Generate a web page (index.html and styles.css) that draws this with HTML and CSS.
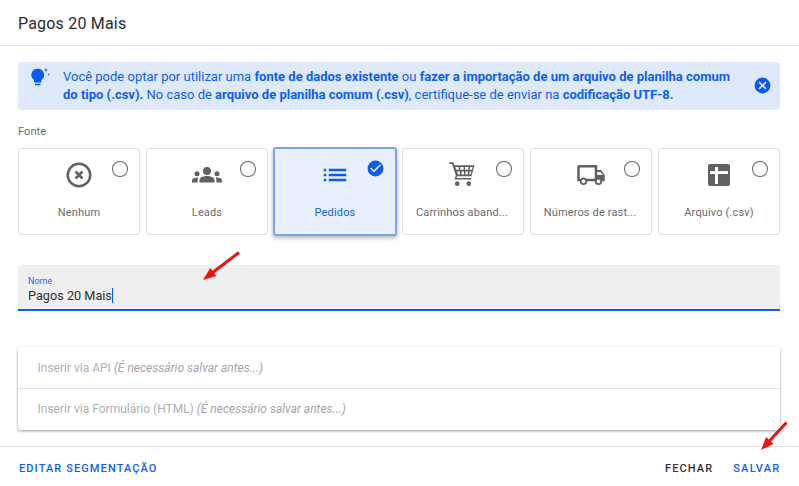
FILE: index.html
```html
<!DOCTYPE html>
<html lang="pt">
<head>
<meta charset="utf-8">
<title>Pagos 20 Mais</title>
<link rel="stylesheet" href="styles.css">
</head>
<body>
<div class="dialog">
  <header class="title">Pagos 20 Mais</header>
  <main class="content">
    <div class="alert">
      <svg class="alert-icon" viewBox="0 0 24 24"><path d="M9.500 4a6.800 6.800 0 0 0-4 12.400V19h8v-2.600A6.800 6.800 0 0 0 9.500 4zM6.500 20.500h6V22h-6z"/><path d="M18.500 3l.6 1.900 1.900.6-1.900.6-.6 1.900-.6-1.900-1.900-.6 1.900-.6zM21.500 9l.4 1.100 1.100.4-1.100.4-.4 1.100-.4-1.100-1.100-.4 1.100-.4z"/></svg>
      <p class="alert-text"><span class="line">Você pode optar por utilizar uma <b>fonte de dados existente</b> ou <b>fazer a importação de um arquivo de planilha comum</b></span><span class="line"><b>do tipo (.csv).</b> No caso de <b>arquivo de planilha comum (.csv)</b>, certifique-se de enviar na <b>codificação UTF-8.</b></span></p>
      <svg class="alert-close" viewBox="0 0 24 24"><path d="M12 2a10 10 0 1 0 0 20 10 10 0 0 0 0-20zm5 13.600L15.600 17 12 13.400 8.400 17 7 15.600 10.600 12 7 8.400 8.400 7 12 10.600 15.600 7 17 8.400 13.400 12z"/></svg>
    </div>
    <div class="label">Fonte</div>
    <div class="cards">
      <div class="card">
        <svg class="card-icon" viewBox="0 0 24 24"><path d="M12 2a10 10 0 1 0 0 20 10 10 0 0 0 0-20zm0 18a8 8 0 1 1 0-16 8 8 0 0 1 0 16z"/><path class="cross" d="M9.200 9.200l5.600 5.600M14.800 9.200l-5.600 5.600"/></svg>
        <span class="radio"></span>
        <span class="card-name">Nenhum</span>
      </div>
      <div class="card">
        <svg class="card-icon" viewBox="0 0 24 24"><path d="M12 12.750c1.630 0 3.070.39 4.240.9A3 3 0 0 1 18 16.390V18H6v-1.600c0-1.190.68-2.260 1.760-2.740 1.170-.52 2.610-.91 4.240-.91zM4 13a2 2 0 1 0 0-4 2 2 0 0 0 0 4zm1.130 1.100A7 7 0 0 0 4 14c-.99 0-1.930.21-2.780.58A2 2 0 0 0 0 16.430V18h4.500v-1.610c0-.83.230-1.610.63-2.290zM20 13a2 2 0 1 0 0-4 2 2 0 0 0 0 4zm4 3.430c0-.81-.48-1.530-1.220-1.850A6.950 6.950 0 0 0 20 14c-.39 0-.76.04-1.130.1.400.68.630 1.460.630 2.290V18H24v-1.570zM12 5.500a3.200 3.200 0 1 1 0 6.400 3.200 3.200 0 0 1 0-6.400z"/></svg>
        <span class="radio"></span>
        <span class="card-name">Leads</span>
      </div>
      <div class="card card-active">
        <svg class="card-icon" viewBox="0 0 24 24"><path d="M3 7h2v2H3zM3 11h2v2H3zM3 15h2v2H3zM7 7h14v2H7zM7 11h14v2H7zM7 15h14v2H7z"/></svg>
        <svg class="check" viewBox="0 0 24 24"><path d="M12 2a10 10 0 1 0 0 20 10 10 0 0 0 0-20zm-2 15-5-5 1.400-1.400 3.600 3.600 7.600-7.600L19 8z"/></svg>
        <span class="card-name">Pedidos</span>
      </div>
      <div class="card">
        <svg class="card-icon" viewBox="0 0 26 26"><path d="M1 2h3.600l1 2.500H23l-2.700 9.500H8l-.6 1.500H20V17H5.500l1.300-3.500L3.500 3.500H1zM6.300 6l.9 2.500h2.300L9.200 6zm4.200 0 .3 2.500h2.700V6zm4.300 0v2.500h2.600L17.700 6zm4.300 0-.4 2.500h2l.7-2.500zM7.800 10l.9 2.500h1.700L10.100 10zm3.800 0 .3 2.500h1.900V10zm3.500 0v2.500h1.900l.3-2.500zm3.700 0-.4 2.500h1.200l.7-2.500z"/><circle cx="8" cy="20.500" r="2"/><circle cx="18" cy="20.500" r="2"/></svg>
        <span class="radio"></span>
        <span class="card-name card-name-cut">Carrinhos aband...</span>
      </div>
      <div class="card">
        <svg class="card-icon" viewBox="0 0 24 24"><path d="M20 8h-3V4H3a2 2 0 0 0-2 2v11h2a3 3 0 0 0 6 0h6a3 3 0 0 0 6 0h2v-5zM6 18.500a1.500 1.500 0 1 1 0-3 1.500 1.500 0 0 1 0 3zM19.500 9.500l2 2.500H17V9.500zM18 18.500a1.500 1.500 0 1 1 0-3 1.500 1.500 0 0 1 0 3zM8.200 15A3 3 0 0 0 3.800 15H3V6h12v9z"/></svg>
        <span class="radio"></span>
        <span class="card-name card-name-cut">Números de rast...</span>
      </div>
      <div class="card">
        <svg class="card-icon" viewBox="0 0 30 30"><rect x="4" y="4" width="22" height="22" rx="2"/><path class="plus" d="M6 11h5V7h3v4h10v3H14v10h-3V14H6z"/></svg>
        <span class="radio"></span>
        <span class="card-name">Arquivo (.csv)</span>
      </div>
    </div>
    <div class="field">
      <span class="field-label">Nome</span>
      <span class="field-value">Pagos 20 Mais<i class="caret"></i></span>
    </div>
    <div class="panels">
      <div class="panel">Inserir via API <em>(É necessário salvar antes...)</em></div>
      <div class="panel">Inserir via Formulário (HTML) <em>(É necessário salvar antes...)</em></div>
    </div>
  </main>
  <footer class="actions">
    <span class="btn btn-blue">EDITAR SEGMENTAÇÃO</span>
    <span class="spacer"></span>
    <span class="btn btn-dark">FECHAR</span>
    <span class="btn btn-blue btn-wide">SALVAR</span>
  </footer>
</div>
<svg class="arrow arrow-name" viewBox="0 0 37 30"><path d="M0 29 7.300 17l2.100 2.800L35.100.3l1.800 2.400-25.700 19.500 2.100 2.800z"/></svg>
<svg class="arrow arrow-save" viewBox="0 0 27 30"><path d="M0 29 5.100 16.100l2.600 2.400L24.400.5l2.200 2-16.700 18 2.600 2.400z"/></svg>
</body>
</html>
```

FILE: styles.css
```css
* { box-sizing: border-box; }
html, body { margin: 0; padding: 0; background: #fff; }
body {
  width: 799px;
  height: 486px;
  overflow: hidden;
  position: relative;
  font-family: Roboto, "Liberation Sans", sans-serif;
  color: #2b2b2b;
}
.dialog { display: flex; flex-direction: column; height: 486px; }
.title {
  height: 46px;
  flex: none;
  padding: 14px 18px 0;
  font-size: 16px;
  line-height: 20px;
  letter-spacing: .2px;
  border-bottom: 1px solid #e0e0e0;
  color: #2c2c2c;
}
.content { flex: none; height: 400px; padding: 16px 19px 0 18px; }
.alert {
  height: 48px;
  display: flex;
  align-items: flex-start;
  background: #deeafc;
  border-radius: 3px;
  color: #0d5fee;
}
.alert-icon { width: 22px; height: 22px; margin: 3px 0 0 11px; fill: #0a5cf0; flex: none; }
.alert-text {
  margin: 6px 0 0 12px;
  width: 680px;
  font-size: 13px;
  line-height: 18px;
  flex: none;
}
.line { display: block; white-space: nowrap; }
.alert-text b { font-weight: 700; }
.alert-close { width: 19px; height: 19px; margin: 14px 0 0 10px; fill: #0a5cf0; flex: none; }
.label { margin-top: 15px; font-size: 11px; line-height: 14px; color: #6b6b6b; letter-spacing: .1px; }
.cards { display: flex; gap: 6px; margin-top: 9px; }
.card {
  position: relative;
  width: 122px;
  height: 87px;
  border: 1px solid #e0e0e0;
  border-radius: 3px;
  background: #fff;
  display: flex;
  flex-direction: column;
  align-items: center;
}
.card-icon { width: 30px; height: 30px; margin-top: 11px; fill: #616161; flex: none; }
.cross { fill: none; stroke: #616161; stroke-width: 2; }
.plus { fill: #fff; }
.card-name { margin-top: 16px; font-size: 11px; line-height: 14px; color: #6b6b6b; letter-spacing: .15px; white-space: nowrap; }
.card-name-cut { margin-right: 2px; }
.radio {
  position: absolute;
  top: 12px;
  right: 11.500px;
  width: 15.500px;
  height: 16px;
  border: 1.500px solid #666;
  border-radius: 50%;
}
.check { position: absolute; top: 10px; right: 10px; width: 19px; height: 19px; fill: #0a5cf0; }
.card-active {
  width: 124px;
  height: 89px;
  margin: -1px;
  background: #e8f0fe;
  border: 2px solid #7aa3ee;
  box-shadow: 0 2px 4px rgba(0,0,0,.3);
}
.card-active .card-icon { fill: #0a5cf0; }
.card-active .card-name { color: #0d5fee; }
.field {
  height: 46px;
  margin-top: 30px;
  padding: 11px 10px 0;
  background: #efefef;
  border-bottom: 2px solid #0a5cf0;
  border-radius: 3px 3px 0 0;
  display: flex;
  flex-direction: column;
}
.field-label { font-size: 9px; line-height: 11px; color: #2468e8; }
.field-value { font-size: 12.700px; line-height: 17px; color: #2f2f2f; display: flex; align-items: center; }
.caret { display: inline-block; width: 1px; height: 15px; background: #0a5cf0; }
.panels {
  margin-top: 36px;
  height: 83px;
  border-radius: 3px;
  box-shadow: 0 1px 3px rgba(0,0,0,.4);
  background: #fff;
  display: flex;
  flex-direction: column;
}
.panel {
  flex: none;
  height: 41px;
  display: flex;
  align-items: center;
  gap: 3px;
  padding: 1px 0 0 19.500px;
  font-size: 12px;
  color: #b0b0b0;
}
.panel + .panel { height: 42px; border-top: 1px solid #e0e0e0; padding: 0 0 1px 19.500px; }
.panel em { font-style: italic; color: #a5a5a5; }
.actions {
  flex: none;
  height: 40px;
  border-top: 1px solid #e0e0e0;
  display: flex;
  align-items: center;
  padding: 4px 18.500px 0 19px;
  gap: 20px;
}
.spacer { flex: 1; }
.btn { font-size: 11px; font-weight: 500; letter-spacing: 1.100px; }
.btn-blue { color: #0d5fee; }
.btn-dark { color: #333; }
.btn-wide { letter-spacing: 1.250px; }
.arrow { position: absolute; fill: #f01010; }
.arrow-name { left: 203px; top: 251px; width: 37px; height: 30px; }
.arrow-save { left: 761px; top: 421px; width: 27px; height: 30px; }
```
